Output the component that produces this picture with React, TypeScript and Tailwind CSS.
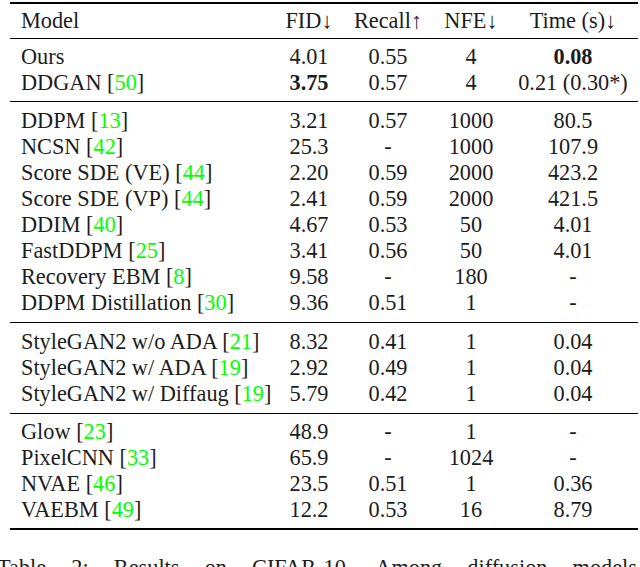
import React from 'react';

type Row = {
  model: string;
  cite: string;
  fid: string;
  recall: string;
  nfe: string;
  time: string;
  boldFid?: boolean;
  boldTime?: boolean;
};

const sections: Row[][] = [
  [
    { model: 'Ours', cite: '', fid: '4.01', recall: '0.55', nfe: '4', time: '0.08', boldTime: true },
    { model: 'DDGAN', cite: '50', fid: '3.75', recall: '0.57', nfe: '4', time: '0.21 (0.30*)', boldFid: true },
  ],
  [
    { model: 'DDPM', cite: '13', fid: '3.21', recall: '0.57', nfe: '1000', time: '80.5' },
    { model: 'NCSN', cite: '42', fid: '25.3', recall: '-', nfe: '1000', time: '107.9' },
    { model: 'Score SDE (VE)', cite: '44', fid: '2.20', recall: '0.59', nfe: '2000', time: '423.2' },
    { model: 'Score SDE (VP)', cite: '44', fid: '2.41', recall: '0.59', nfe: '2000', time: '421.5' },
    { model: 'DDIM', cite: '40', fid: '4.67', recall: '0.53', nfe: '50', time: '4.01' },
    { model: 'FastDDPM', cite: '25', fid: '3.41', recall: '0.56', nfe: '50', time: '4.01' },
    { model: 'Recovery EBM', cite: '8', fid: '9.58', recall: '-', nfe: '180', time: '-' },
    { model: 'DDPM Distillation', cite: '30', fid: '9.36', recall: '0.51', nfe: '1', time: '-' },
  ],
  [
    { model: 'StyleGAN2 w/o ADA', cite: '21', fid: '8.32', recall: '0.41', nfe: '1', time: '0.04' },
    { model: 'StyleGAN2 w/ ADA', cite: '19', fid: '2.92', recall: '0.49', nfe: '1', time: '0.04' },
    { model: 'StyleGAN2 w/ Diffaug', cite: '19', fid: '5.79', recall: '0.42', nfe: '1', time: '0.04' },
  ],
  [
    { model: 'Glow', cite: '23', fid: '48.9', recall: '-', nfe: '1', time: '-' },
    { model: 'PixelCNN', cite: '33', fid: '65.9', recall: '-', nfe: '1024', time: '-' },
    { model: 'NVAE', cite: '46', fid: '23.5', recall: '0.51', nfe: '1', time: '0.36' },
    { model: 'VAEBM', cite: '49', fid: '12.2', recall: '0.53', nfe: '16', time: '8.79' },
  ],
];

// padding per section, tuned to the rules in the source
const sectionPad = ['py-[5px]', 'py-[6px]', 'py-[6px]', 'py-[5px]'];

const cols = 'grid grid-cols-[264px_70px_88px_78px_126px]';

function DataRow({ row }: { row: Row }) {
  return (
    <div className={`${cols} h-[26px] items-center`}>
      <div className="pl-[11px] whitespace-nowrap">
        {row.model}
        {row.cite && (
          <>
            {' '}[<span className="text-[#00ff00]">{row.cite}</span>]
          </>
        )}
      </div>
      <div className={`text-center ${row.boldFid ? 'font-bold' : ''}`}>{row.fid}</div>
      <div className="text-center">{row.recall}</div>
      <div className="text-center">{row.nfe}</div>
      <div className={`text-center whitespace-nowrap ${row.boldTime ? 'font-bold' : ''}`}>{row.time}</div>
    </div>
  );
}

export default function App() {
  return (
    <div className="w-[640px] h-[567px] overflow-hidden bg-white text-[#1c1c1c] [font-family:'Liberation_Serif','Times_New_Roman',serif] text-[22.3px] leading-none">
      <div className="pt-[2px] pl-[10px] w-[638px]">
        <div className="border-t-2 border-black">
          {/* header */}
          <div className={`${cols} h-[35px] items-center border-b border-black`}>
            <div className="pl-[11px]">Model</div>
            <div className="text-center whitespace-nowrap">FID↓</div>
            <div className="text-center whitespace-nowrap">Recall↑</div>
            <div className="text-center whitespace-nowrap">NFE↓</div>
            <div className="text-center whitespace-nowrap">Time (s)↓</div>
          </div>

          {sections.map((sec, i) => (
            <div
              key={i}
              className={`${sectionPad[i]} ${i < sections.length - 1 ? 'border-b border-black' : 'border-b-2 border-black'}`}
            >
              {sec.map((row) => (
                <DataRow key={row.model + row.cite} row={row} />
              ))}
            </div>
          ))}
        </div>
      </div>

      {/* caption, cut off by the frame like in the source */}
      <div className="mt-[27px] -ml-[3px] w-[640px] text-justify [text-align-last:justify] whitespace-nowrap">
        Table 2: Results on CIFAR-10. Among diffusion models
      </div>
    </div>
  );
}
